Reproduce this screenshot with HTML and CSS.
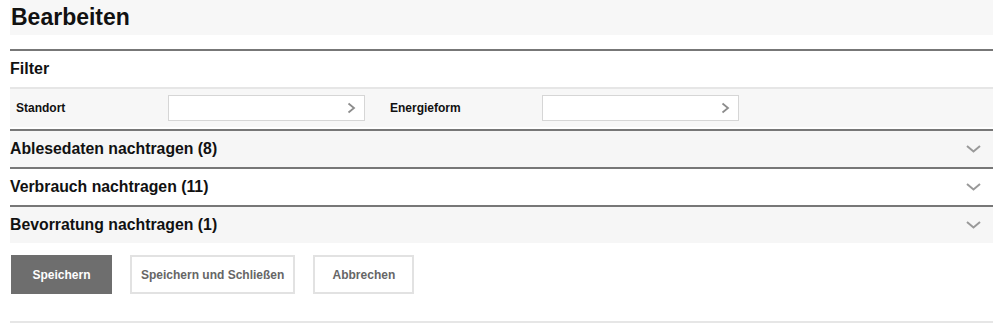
FILE: index.html
```html
<!DOCTYPE html>
<html lang="de">
<head>
    <meta charset="UTF-8">
    <title>Bearbeiten</title>
    <link rel="stylesheet" href="styles.css">
</head>
<body>
    <div class="page">
        <h1 class="title">Bearbeiten</h1>

        <div class="filter">
            <div class="filter-head">Filter</div>
            <div class="filter-row">
                <label class="filter-label">Standort</label>
                <div class="picker">
                    <svg width="9" height="12" viewBox="0 0 9 12"><polyline points="1.5,1.5 7,6 1.5,10.5" fill="none" stroke="#8c8c8c" stroke-width="1.8"/></svg>
                </div>
                <label class="filter-label second">Energieform</label>
                <div class="picker">
                    <svg width="9" height="12" viewBox="0 0 9 12"><polyline points="1.5,1.5 7,6 1.5,10.5" fill="none" stroke="#8c8c8c" stroke-width="1.8"/></svg>
                </div>
            </div>
        </div>

        <div class="section grey">
            <span>Ablesedaten nachtragen (8)</span>
            <svg class="chevron" width="15" height="8" viewBox="0 0 15 8"><polyline points="1,1 7.5,6.5 14,1" fill="none" stroke="#999" stroke-width="2"/></svg>
        </div>
        <div class="section">
            <span>Verbrauch nachtragen (11)</span>
            <svg class="chevron" width="15" height="8" viewBox="0 0 15 8"><polyline points="1,1 7.5,6.5 14,1" fill="none" stroke="#999" stroke-width="2"/></svg>
        </div>
        <div class="section grey">
            <span>Bevorratung nachtragen (1)</span>
            <svg class="chevron" width="15" height="8" viewBox="0 0 15 8"><polyline points="1,1 7.5,6.5 14,1" fill="none" stroke="#999" stroke-width="2"/></svg>
        </div>

        <div class="actions">
            <button class="btn primary">Speichern</button>
            <button class="btn">Speichern und Schließen</button>
            <button class="btn">Abbrechen</button>
        </div>

        <div class="footer-line"></div>
    </div>
</body>
</html>
```

FILE: styles.css
```css
body {
    margin: 0;
    font-family: "Liberation Sans", Arial, sans-serif;
    color: #111;
    background: #fff;
}
.page {
    margin-left: 10px;
    width: 983px;
}
.title {
    margin: 0;
    height: 35px;
    line-height: 35px;
    padding-left: 1px;
    font-size: 23px;
    font-weight: bold;
    background-color: #f7f7f7;
}
.filter {
    margin-top: 14px;
    border-top: 2px solid #777;
}
.filter-head {
    height: 36px;
    line-height: 36px;
    font-size: 16px;
    font-weight: bold;
    border-bottom: 2px solid #e6e6e6;
}
.filter-row {
    display: flex;
    align-items: center;
    height: 38px;
    padding-left: 6px;
    background-color: #f7f7f7;
    margin-bottom: 2px;
}
.filter-label {
    width: 152px;
    font-size: 12px;
    font-weight: bold;
}
.filter-label.second {
    margin-left: 25px;
}
.picker {
    width: 197px;
    height: 26px;
    box-sizing: border-box;
    border: 1px solid #d6d6d6;
    background: #fff;
    display: flex;
    align-items: center;
    justify-content: flex-end;
    padding-right: 8px;
}
.section {
    display: flex;
    align-items: center;
    justify-content: space-between;
    height: 36px;
    border-top: 2px solid #777;
    font-size: 15.8px;
    font-weight: bold;
}
.section.grey {
    background-color: #f6f6f6;
}
.chevron {
    margin-right: 12px;
}
.actions {
    display: flex;
    gap: 18px;
    padding-top: 12px;
    padding-left: 1px;
}
.btn {
    height: 39px;
    padding: 0 9px;
    min-width: 101px;
    font-family: "Liberation Sans", Arial, sans-serif;
    font-size: 12px;
    font-weight: bold;
    color: #666;
    background: #fff;
    border: 2px solid #e2e2e2;
}
.btn.primary {
    color: #fff;
    background-color: #6e6e6e;
    border-color: #6e6e6e;
}
.footer-line {
    margin-top: 27px;
    height: 2px;
    background-color: #e6e6e6;
}
```
